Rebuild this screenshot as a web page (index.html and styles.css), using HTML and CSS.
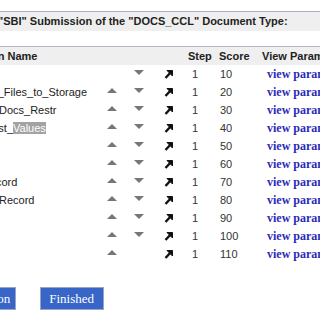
FILE: index.html
```html
<!DOCTYPE html>
<html>
<head>
    <meta charset="UTF-8">
    <title>Functions of the SBI Submission</title>
    <link rel="stylesheet" href="styles.css">
</head>
<body>
    <div class="page">
        <div class="title">"SBI" Submission of the "DOCS_CCL" Document Type:</div>

        <table class="functions">
            <colgroup>
                <col class="c-name"><col class="c-up"><col class="c-down"><col class="c-edit">
                <col class="c-step"><col class="c-score"><col class="c-view">
            </colgroup>
            <tr class="head">
                <th class="name">Function Name</th>
                <th></th><th></th><th></th>
                <th class="step">Step</th>
                <th class="score">Score</th>
                <th class="view">View Parameters</th>
            </tr>
            <tr>
                <td class="name">Get_Id</td>
                <td class="mv"></td>
                <td class="mv"><span class="down"></span></td>
                <td class="edit"><svg width="9" height="9" viewBox="0 0 9 9"><polygon points="3,0.5 8.5,0.5 8.5,6"/><line x1="7.5" y1="1.5" x2="1.5" y2="8" stroke-width="2.4"/></svg></td>
                <td class="step">1</td><td class="score">10</td>
                <td class="view"><a href="#">view parameters</a></td>
            </tr>
            <tr>
                <td class="name">Process_Files_to_Storage</td>
                <td class="mv"><span class="up"></span></td>
                <td class="mv"><span class="down"></span></td>
                <td class="edit"><svg width="9" height="9" viewBox="0 0 9 9"><polygon points="3,0.5 8.5,0.5 8.5,6"/><line x1="7.5" y1="1.5" x2="1.5" y2="8" stroke-width="2.4"/></svg></td>
                <td class="step">1</td><td class="score">20</td>
                <td class="view"><a href="#">view parameters</a></td>
            </tr>
            <tr>
                <td class="name">RemoveDocs_Restr</td>
                <td class="mv"><span class="up"></span></td>
                <td class="mv"><span class="down"></span></td>
                <td class="edit"><svg width="9" height="9" viewBox="0 0 9 9"><polygon points="3,0.5 8.5,0.5 8.5,6"/><line x1="7.5" y1="1.5" x2="1.5" y2="8" stroke-width="2.4"/></svg></td>
                <td class="step">1</td><td class="score">30</td>
                <td class="view"><a href="#">view parameters</a></td>
            </tr>
            <tr>
                <td class="name">Print_Test_<span class="sel">Values</span></td>
                <td class="mv"><span class="up"></span></td>
                <td class="mv"><span class="down"></span></td>
                <td class="edit"><svg width="9" height="9" viewBox="0 0 9 9"><polygon points="3,0.5 8.5,0.5 8.5,6"/><line x1="7.5" y1="1.5" x2="1.5" y2="8" stroke-width="2.4"/></svg></td>
                <td class="step">1</td><td class="score">40</td>
                <td class="view"><a href="#">view parameters</a></td>
            </tr>
            <tr>
                <td class="name">Notify</td>
                <td class="mv"><span class="up"></span></td>
                <td class="mv"><span class="down"></span></td>
                <td class="edit"><svg width="9" height="9" viewBox="0 0 9 9"><polygon points="3,0.5 8.5,0.5 8.5,6"/><line x1="7.5" y1="1.5" x2="1.5" y2="8" stroke-width="2.4"/></svg></td>
                <td class="step">1</td><td class="score">50</td>
                <td class="view"><a href="#">view parameters</a></td>
            </tr>
            <tr>
                <td class="name">Mail_It</td>
                <td class="mv"><span class="up"></span></td>
                <td class="mv"><span class="down"></span></td>
                <td class="edit"><svg width="9" height="9" viewBox="0 0 9 9"><polygon points="3,0.5 8.5,0.5 8.5,6"/><line x1="7.5" y1="1.5" x2="1.5" y2="8" stroke-width="2.4"/></svg></td>
                <td class="step">1</td><td class="score">60</td>
                <td class="view"><a href="#">view parameters</a></td>
            </tr>
            <tr>
                <td class="name">Get_Record</td>
                <td class="mv"><span class="up"></span></td>
                <td class="mv"><span class="down"></span></td>
                <td class="edit"><svg width="9" height="9" viewBox="0 0 9 9"><polygon points="3,0.5 8.5,0.5 8.5,6"/><line x1="7.5" y1="1.5" x2="1.5" y2="8" stroke-width="2.4"/></svg></td>
                <td class="step">1</td><td class="score">70</td>
                <td class="view"><a href="#">view parameters</a></td>
            </tr>
            <tr>
                <td class="name">RegisterRecord</td>
                <td class="mv"><span class="up"></span></td>
                <td class="mv"><span class="down"></span></td>
                <td class="edit"><svg width="9" height="9" viewBox="0 0 9 9"><polygon points="3,0.5 8.5,0.5 8.5,6"/><line x1="7.5" y1="1.5" x2="1.5" y2="8" stroke-width="2.4"/></svg></td>
                <td class="step">1</td><td class="score">80</td>
                <td class="view"><a href="#">view parameters</a></td>
            </tr>
            <tr>
                <td class="name">Finish</td>
                <td class="mv"><span class="up"></span></td>
                <td class="mv"><span class="down"></span></td>
                <td class="edit"><svg width="9" height="9" viewBox="0 0 9 9"><polygon points="3,0.5 8.5,0.5 8.5,6"/><line x1="7.5" y1="1.5" x2="1.5" y2="8" stroke-width="2.4"/></svg></td>
                <td class="step">1</td><td class="score">90</td>
                <td class="view"><a href="#">view parameters</a></td>
            </tr>
            <tr>
                <td class="name">Set_Ok</td>
                <td class="mv"><span class="up"></span></td>
                <td class="mv"><span class="down"></span></td>
                <td class="edit"><svg width="9" height="9" viewBox="0 0 9 9"><polygon points="3,0.5 8.5,0.5 8.5,6"/><line x1="7.5" y1="1.5" x2="1.5" y2="8" stroke-width="2.4"/></svg></td>
                <td class="step">1</td><td class="score">100</td>
                <td class="view"><a href="#">view parameters</a></td>
            </tr>
            <tr>
                <td class="name">Log_Id</td>
                <td class="mv"><span class="up"></span></td>
                <td class="mv"></td>
                <td class="edit"><svg width="9" height="9" viewBox="0 0 9 9"><polygon points="3,0.5 8.5,0.5 8.5,6"/><line x1="7.5" y1="1.5" x2="1.5" y2="8" stroke-width="2.4"/></svg></td>
                <td class="step">1</td><td class="score">110</td>
                <td class="view"><a href="#">view parameters</a></td>
            </tr>
        </table>

        <div class="actions">
            <button class="btn first">Add a Function</button>
            <button class="btn">Finished</button>
        </div>
    </div>
</body>
</html>
```

FILE: styles.css
```css
html, body { margin: 0; padding: 0; background: #fff; overflow: hidden; }
body { font-family: "Liberation Sans", Arial, sans-serif; font-size: 11px; color: #222; }
.page { margin-left: -44px; width: 480px; }

.title { margin-top: 11px; height: 19px; line-height: 19px; padding-left: 42px; background: #efefef; border-top: 1px solid #a9b3c6; font-weight: bold; color: #222; white-space: nowrap; }

.functions { margin-top: 15px; border-collapse: collapse; table-layout: fixed; width: 430px; }
.c-name { width: 144px; }
.c-up { width: 24px; }
.c-down { width: 30px; }
.c-edit { width: 28px; }
.c-step { width: 32px; }
.c-score { width: 44px; }
.c-view { width: 128px; }

.functions th, .functions td { padding: 0; white-space: nowrap; overflow: hidden; text-align: left; }
.functions td { height: 18px; line-height: 18px; }
.head th { height: 18px; line-height: 18px; background: #efefef; border-top: 1px solid #b3bac8; font-weight: bold; color: #222; }
.head .name { padding-left: 2px; }
.head .step { padding-left: 6px; }
.head .score { padding-left: 5px; }
.head .view { padding-left: 4px; }

td.name { padding-left: 2px; color: #222; }
.sel { background: #a3a3a3; color: #fff; }

.functions td.mv, .functions td.edit { vertical-align: top; padding-top: 5px; height: 13px; line-height: 0; }
.up, .down { display: block; width: 0; height: 0; margin: 0 auto; border-left: 5.5px solid transparent; border-right: 5.5px solid transparent; }
.up { border-bottom: 5px solid #777; }
.down { border-top: 5px solid #777; }

td.edit svg { display: block; margin: 0 auto; fill: #111; stroke: #111; }

td.step { padding-left: 10px; color: #333; }
td.score { padding-left: 6px; color: #333; }
td.view { padding-left: 9px; }
td.view a { font-family: "Liberation Serif", "Times New Roman", serif; font-size: 12px; font-weight: bold; color: #2b2bb8; text-decoration: none; }

.actions { display: flex; justify-content: flex-end; gap: 24px; width: 148px; margin-top: 24px; }
.btn { flex: none; height: 23px; padding: 0 9px 0 8px; background: #3766c8; color: #fff; border: 1px solid #9aa6bf; font-family: "Liberation Serif", "Times New Roman", serif; font-size: 13px; }
.btn.first { padding-right: 5px; }
```
